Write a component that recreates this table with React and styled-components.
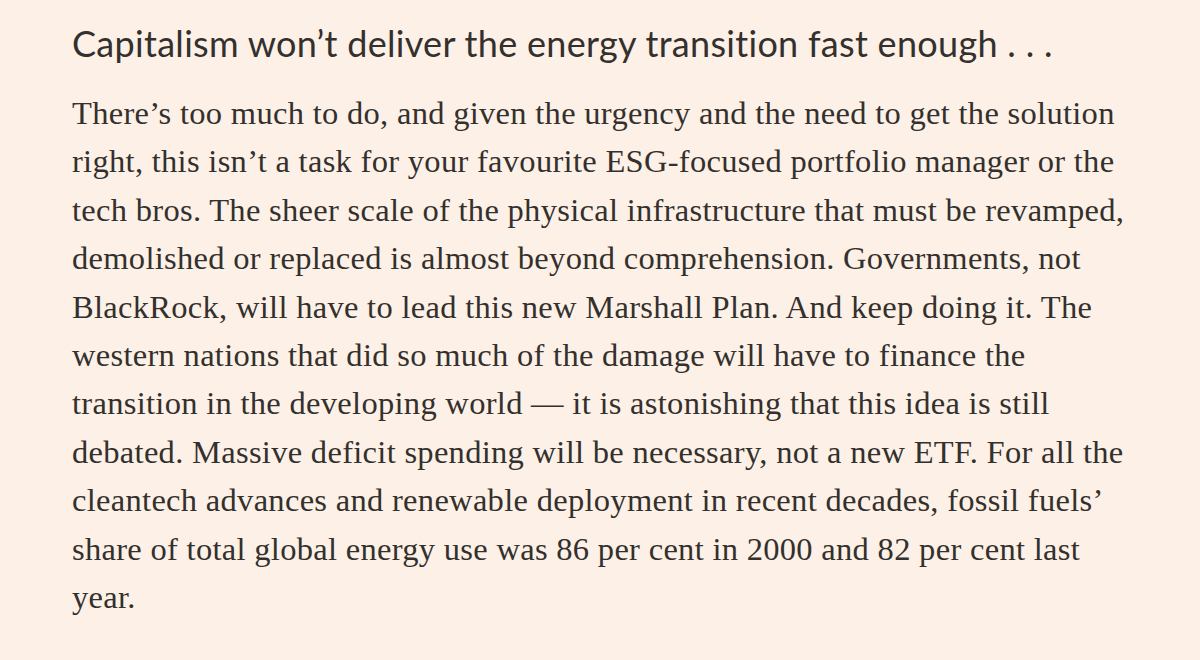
import React from 'react';
import { styled, createGlobalStyle } from 'styled-components';

const GlobalStyle = createGlobalStyle`
  html, body {
    margin: 0;
    padding: 0;
    background: #fdf0e6;
  }
`;

const Page = styled.main`
  width: 1200px;
  height: 660px;
  box-sizing: border-box;
  padding: 21px 0 0 72px;
  background: #fdf0e6;
  color: #33302e;
  overflow: hidden;
`;

const Heading = styled.h2`
  margin: 0 0 24px;
  font-family: Lato, 'Open Sans', sans-serif;
  font-weight: 400;
  font-size: 36px;
  line-height: 44px;
  letter-spacing: 0.3px;
  color: #33302e;
  white-space: nowrap;
`;

const Body = styled.p`
  margin: 0;
  font-family: 'Liberation Serif', 'Times New Roman', serif;
  font-size: 32.5px;
  line-height: 48.4px;
  letter-spacing: 0.3px;
  color: #33302e;
`;

const Line = styled.span`
  display: block;
  white-space: nowrap;
`;

const lines = [
  'There’s too much to do, and given the urgency and the need to get the solution',
  'right, this isn’t a task for your favourite ESG-focused portfolio manager or the',
  'tech bros. The sheer scale of the physical infrastructure that must be revamped,',
  'demolished or replaced is almost beyond comprehension. Governments, not',
  'BlackRock, will have to lead this new Marshall Plan. And keep doing it. The',
  'western nations that did so much of the damage will have to finance the',
  'transition in the developing world — it is astonishing that this idea is still',
  'debated. Massive deficit spending will be necessary, not a new ETF. For all the',
  'cleantech advances and renewable deployment in recent decades, fossil fuels’',
  'share of total global energy use was 86 per cent in 2000 and 82 per cent last',
  'year.',
];

export default function App() {
  return (
    <>
      <GlobalStyle />
      <Page>
        <Heading>Capitalism won’t deliver the energy transition fast enough . . .</Heading>
        <Body>
          {lines.map((text) => (
            <Line key={text}>{text}</Line>
          ))}
        </Body>
      </Page>
    </>
  );
}
